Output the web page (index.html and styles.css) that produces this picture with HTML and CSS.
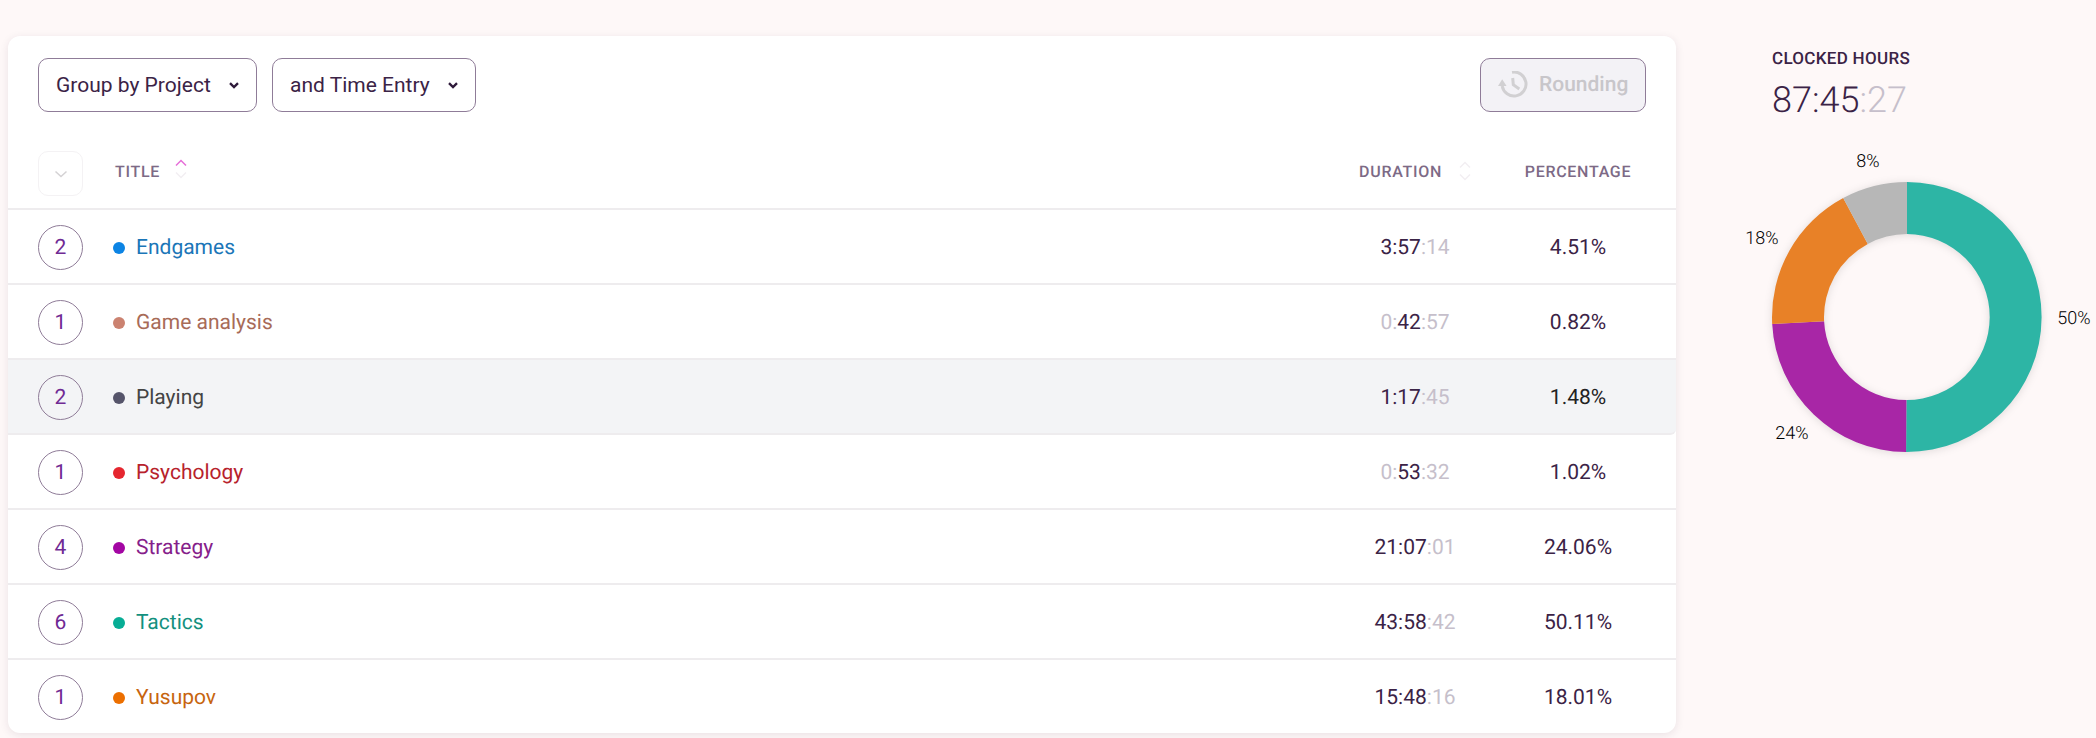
FILE: index.html
```html
<!DOCTYPE html>
<html lang="en">
<head>
<meta charset="utf-8">
<title>Clocked hours</title>
<link rel="stylesheet" href="styles.css">
</head>
<body>
<div class="page">
  <main class="card">
    <div class="toolbar">
      <div class="select-wrap wide">
        <select class="select"><option>Group by Project</option></select>
        <svg class="select-arrow" viewBox="0 0 10 7"><path d="M1 1.2 5 5 9 1.2"/></svg>
      </div>
      <div class="select-wrap narrow">
        <select class="select"><option>and Time Entry</option></select>
        <svg class="select-arrow" viewBox="0 0 10 7"><path d="M1 1.2 5 5 9 1.2"/></svg>
      </div>
      <button class="round-btn" disabled>
        <svg class="round-icon" viewBox="0 0 30 28"><path d="M14 1.2A12 12 0 1 1 4.2 15"/><path class="solid" d="M4.2 8.2 8.6 15H0z"/><path d="M14.7 7l.6 6.7 6 4.3"/></svg>
        Rounding
      </button>
    </div>
    <div class="row head">
      <span class="expand"><svg class="chev" viewBox="0 0 14 8"><path d="M1.5 1.5 7 6.5l5.5-5"/></svg></span>
      <div class="th title-th">Title
        <svg class="sort" viewBox="0 0 12 20"><path class="on" d="M1 6.5 6 1.5l5 5"/><path d="M1 13.5l5 5 5-5"/></svg>
      </div>
      <div class="th center">Duration
        <svg class="sort dur-sort" viewBox="0 0 12 20"><path d="M1 6.5 6 1.5l5 5"/><path d="M1 13.5l5 5 5-5"/></svg>
      </div>
      <div class="th center">Percentage</div>
    </div>
    <div class="row">
      <span class="badge">2</span>
      <div class="name name-endgames"><i class="dot"></i>Endgames</div>
      <div class="num">3:57<s>:14</s></div>
      <div class="num">4.51%</div>
    </div>
    <div class="row">
      <span class="badge">1</span>
      <div class="name name-analysis"><i class="dot"></i>Game analysis</div>
      <div class="num"><s>0:</s>42<s>:57</s></div>
      <div class="num">0.82%</div>
    </div>
    <div class="row hovered">
      <span class="badge">2</span>
      <div class="name name-playing"><i class="dot"></i>Playing</div>
      <div class="num">1:17<s>:45</s></div>
      <div class="num dark">1.48%</div>
    </div>
    <div class="row">
      <span class="badge">1</span>
      <div class="name name-psychology"><i class="dot"></i>Psychology</div>
      <div class="num"><s>0:</s>53<s>:32</s></div>
      <div class="num">1.02%</div>
    </div>
    <div class="row">
      <span class="badge">4</span>
      <div class="name name-strategy"><i class="dot"></i>Strategy</div>
      <div class="num">21:07<s>:01</s></div>
      <div class="num">24.06%</div>
    </div>
    <div class="row">
      <span class="badge">6</span>
      <div class="name name-tactics"><i class="dot"></i>Tactics</div>
      <div class="num">43:58<s>:42</s></div>
      <div class="num">50.11%</div>
    </div>
    <div class="row last">
      <span class="badge">1</span>
      <div class="name name-yusupov"><i class="dot"></i>Yusupov</div>
      <div class="num">15:48<s>:16</s></div>
      <div class="num">18.01%</div>
    </div>
  </main>
  <aside class="side">
    <div class="side-title">Clocked hours</div>
    <div class="side-time">87:45<s>:27</s></div>
    <svg class="donut" viewBox="0 0 360 320">
      <g class="ring">
        <path class="teal" d="M171 42A135 135 0 1 1 170.06 312L170.42 260A83 83 0 1 0 171 94Z"/>
        <path class="purple" d="M170.06 312A135 135 0 0 1 36.2 184.07L88.1 181.34A83 83 0 0 0 170.42 260Z"/>
        <path class="orange" d="M36.2 184.07A135 135 0 0 1 107.2 58L131.8 103.9A83 83 0 0 0 88.1 181.34Z"/>
        <path class="gray" d="M107.2 58A135 135 0 0 1 171 42L171 94A83 83 0 0 0 131.8 103.9Z"/>
      </g>
      <text x="132" y="22">8%</text>
      <text x="26" y="99">18%</text>
      <text x="338" y="179">50%</text>
      <text x="56" y="294">24%</text>
    </svg>
  </aside>
</div>
</body>
</html>
```
FILE: styles.css
```css
* { box-sizing: border-box; }
html, body { margin: 0; height: 100%; }
body {
  background: #fef8f8;
  font-family: Roboto, "Liberation Sans", sans-serif;
  color: #3b2346;
  overflow: hidden;
  text-rendering: geometricPrecision;
}
s { text-decoration: none; color: #c6bfcb; }
.page { display: flex; align-items: flex-start; padding: 36px 0 0 8px; }
.card {
  width: 1668px;
  background: #fff;
  border-radius: 12px;
  box-shadow: 0 2px 8px rgba(60, 30, 60, 0.1);
}
.toolbar {
  display: flex;
  gap: 15px;
  padding: 22px 30px 0;
  height: 115px;
}
.select-wrap { position: relative; height: 54px; }
.select-wrap.wide { width: 219px; }
.select-wrap.narrow { width: 204px; }
.select {
  appearance: none;
  width: 100%;
  height: 54px;
  padding: 0 0 0 17px;
  border: 1px solid #8f7c98;
  border-radius: 10px;
  background-color: #fff;
  color: #3b2346;
  font: 400 21px Roboto, sans-serif;
}
.select-arrow {
  position: absolute;
  right: 18px;
  top: 24px;
  width: 10px;
  height: 7px;
  fill: none;
  stroke: #2e1a3a;
  stroke-width: 2.4;
  pointer-events: none;
}
.round-btn {
  margin-left: auto;
  height: 54px;
  width: 166px;
  display: flex;
  align-items: center;
  gap: 11px;
  padding: 0 0 0 17px;
  border: 1px solid #8f7c98;
  border-radius: 10px;
  background: #f3f2f6;
  color: #c8c6ca;
  font: 500 21px Roboto, sans-serif;
  text-rendering: geometricPrecision;
}
.round-icon { width: 30px; height: 28px; fill: none; stroke: #d1d0d2; stroke-width: 3; }
.round-icon .solid { fill: #d1d0d2; stroke: none; }
.row {
  display: grid;
  grid-template-columns: 45px 1fr 170px 156px;
  align-items: center;
  height: 75px;
  padding: 2px 20px 0 30px;
  border-bottom: 2px solid #eeecee;
  font-size: 21px;
}
.row.head { height: 59px; padding-top: 0; }
.row.last { height: 73px; border-bottom: 0; }
.row.hovered { background: #f3f4f6; border-bottom-right-radius: 6px; }
.expand {
  width: 45px;
  height: 45px;
  display: flex;
  align-items: center;
  justify-content: center;
  border: 1px solid #f4f2f4;
  border-radius: 10px;
  align-self: start;
}
.chev { width: 14px; height: 8px; fill: none; stroke: #d4d2d4; stroke-width: 1.5; }
.th {
  font-size: 16px;
  font-weight: 500;
  letter-spacing: 0.7px;
  line-height: 20px;
  text-transform: uppercase;
  color: #7d6a86;
  align-self: start;
  padding-top: 11px;
  display: flex;
  align-items: flex-start;
}
.th.center { justify-content: center; }
.title-th { padding-left: 32px; }
.sort { width: 12px; height: 20px; margin-left: 15px; fill: none; stroke: #f2eff2; stroke-width: 1.5; margin-top: -3px; }
.dur-sort { margin-left: 17px; margin-top: -1px; }
.sort .on { stroke: #e66fd8; }
.badge {
  width: 45px;
  height: 45px;
  border: 1px solid #8f7c98;
  border-radius: 50%;
  display: flex;
  align-items: center;
  justify-content: center;
  color: #702a94;
}
.name { display: flex; align-items: center; padding-left: 30px; }
.dot { width: 12px; height: 12px; border-radius: 50%; margin-right: 11px; background: currentColor; }
.name-endgames { color: #1b76b8; }
.name-endgames .dot { background: #0c84e4; }
.name-analysis { color: #a86b58; }
.name-analysis .dot { background: #cb8270; }
.name-playing { color: #444; }
.name-playing .dot { background: #55546a; }
.name-psychology { color: #b7222c; }
.name-psychology .dot { background: #e5262f; }
.name-strategy { color: #85208a; }
.name-strategy .dot { background: #a306a3; }
.name-tactics { color: #13907e; }
.name-tactics .dot { background: #07ad95; }
.name-yusupov { color: #c7650f; }
.name-yusupov .dot { background: #ec6f00; }
.num { text-align: center; }
.num.dark { color: #222; }
.side { width: 360px; margin-left: 60px; }
.side-title {
  margin: 13px 0 0 36px;
  font-size: 17px;
  line-height: 20px;
  font-weight: 500;
  letter-spacing: 0.3px;
  text-transform: uppercase;
}
.side-time {
  margin: 9px 0 0 36px;
  font-size: 36px;
  line-height: 44px;
  font-weight: 300;
}
.donut { display: block; width: 360px; height: 320px; margin-top: 18px; }
.ring { filter: drop-shadow(0 1px 4px rgba(0, 0, 0, 0.12)); }
.teal { fill: #2db5a5; }
.purple { fill: #a826a6; }
.orange { fill: #e88127; }
.gray { fill: #b7b7b7; }
.donut text {
  font: 300 18px Roboto, sans-serif;
  fill: #000;
  text-anchor: middle;
  dominant-baseline: middle;
}
```
